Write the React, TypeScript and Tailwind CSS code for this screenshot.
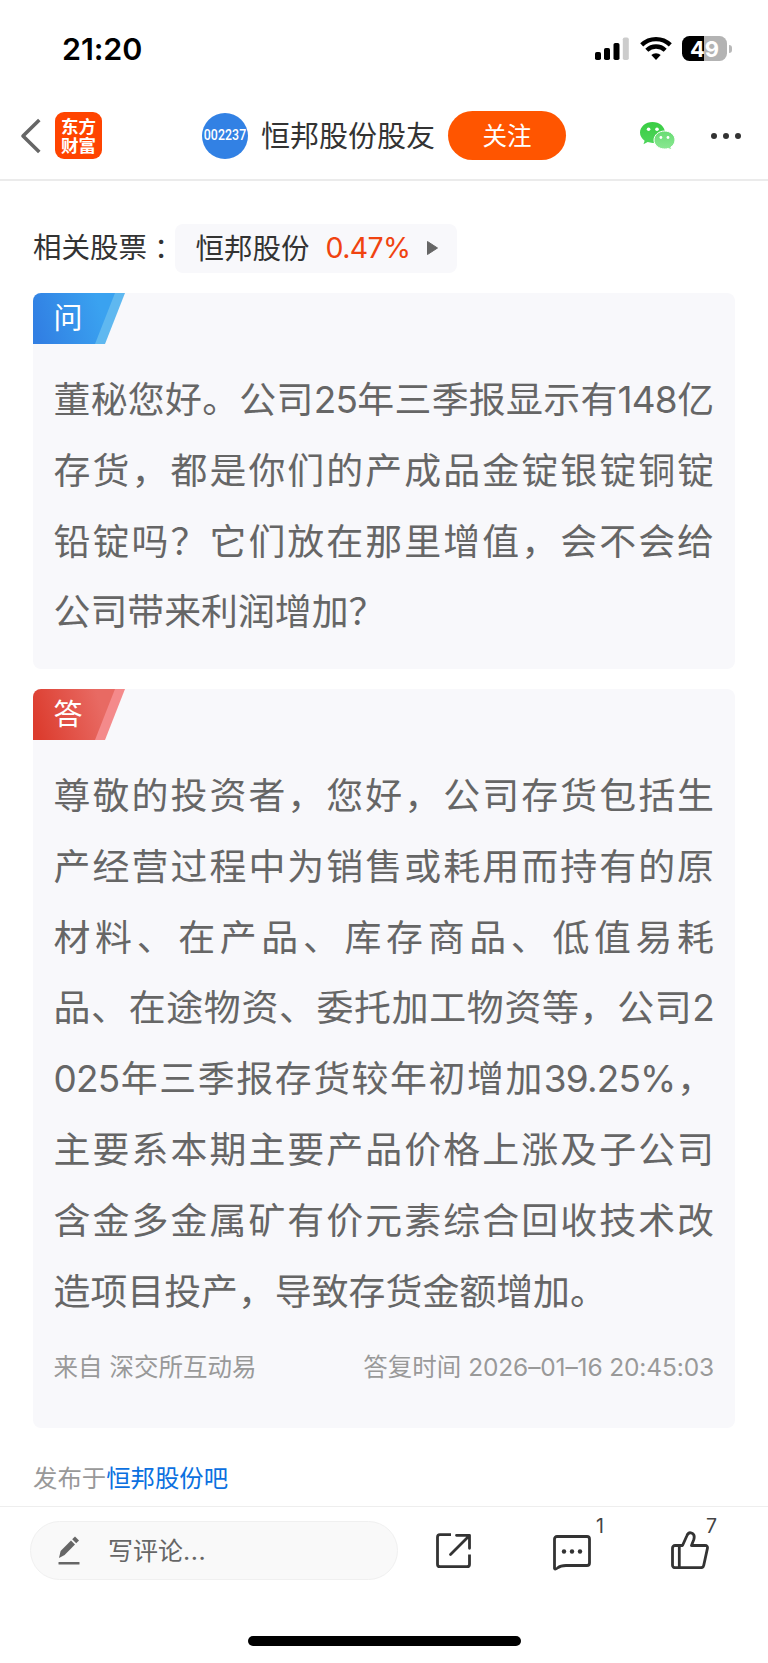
import React from 'react';

const questionLines = [
  '董秘您好。公司25年三季报显示有148亿',
  '存货，都是你们的产成品金锭银锭铜锭',
  '铅锭吗？它们放在那里增值，会不会给',
  '公司带来利润增加？',
];

const answerLines = [
  '尊敬的投资者，您好，公司存货包括生',
  '产经营过程中为销售或耗用而持有的原',
  '材料、在产品、库存商品、低值易耗',
  '品、在途物资、委托加工物资等，公司2',
  '025年三季报存货较年初增加39.25%，',
  '主要系本期主要产品价格上涨及子公司',
  '含金多金属矿有价元素综合回收技术改',
  '造项目投产，导致存货金额增加。',
];

// numbers sit a little tighter than the characters around them
const renderLine = (line: string) =>
  line.split(/([\d.%]+)/).map((part, i) =>
    i % 2 === 1 ? (
      <span key={i} className="tracking-[-0.8px]">{part}</span>
    ) : (
      part
    )
  );

const StatusBar: React.FC = () => (
  <div className="flex h-[92px] items-start justify-between pl-[62px] pr-[36.500px] pt-[36px] text-black">
    <span className="text-[30.5px] leading-[25px] font-semibold tracking-[-0.1px]">21:20</span>
    <div className="flex items-start">
      <svg className="mt-px h-[24px] w-[36px]" viewBox="0 0 36 24">
        <rect x="0" y="15" width="6" height="8" rx="1.8" />
        <rect x="9" y="11" width="6" height="12" rx="1.8" />
        <rect x="18.500" y="6" width="6" height="17" rx="1.8" />
        <rect x="27.800" y="0.500" width="6" height="22.500" rx="1.800" fill="#cccccc" />
      </svg>
      <svg className="ml-[9px] h-[24px] w-[32px]" viewBox="0 0 32 24" fill="none" stroke="#000" strokeWidth="4.300">
        <path d="M1.700 8.900a20.500 20.500 0 0 1 28.600 0" />
        <path d="M6.800 14.200a13.300 13.300 0 0 1 18.400 0" />
        <path d="M16 24l-4.700-4.900a6.800 6.800 0 0 1 9.400 0z" fill="#000" stroke="none" />
      </svg>
      <div className="ml-[10px] flex items-center">
        <div className="flex h-[25px] w-[45px] items-center justify-center rounded-[7.500px] bg-linear-to-r from-black from-49% to-[#b3b3b3] to-49% text-[22px] leading-none font-bold text-white">
          49
        </div>
        <div className="ml-[2px] h-[8px] w-[2.500px] rounded-r-full bg-[#b8b8b8]" />
      </div>
    </div>
  </div>
);

const Header: React.FC = () => (
  <header className="flex h-[89px] items-center border-b-2 border-[#ebebeb] pl-[20px] text-[#333]">
    <svg className="h-[36px] w-[21px]" viewBox="0 0 21 36" fill="none" stroke="#666" strokeWidth="3.600">
      <path d="M19.300 2L3 18l16.300 16" strokeLinejoin="round" />
    </svg>
    <div className="ml-[14px] flex h-[47px] w-[47px] flex-col items-center justify-center rounded-[9px] bg-[#ff4400] text-[17.500px] leading-[19px] font-bold text-white">
      <span>东方</span>
      <span>财富</span>
    </div>
    <div className="ml-[100px] flex h-[46px] w-[46px] items-center justify-center rounded-full bg-[#3281e4] text-white">
      <span className="scale-x-[0.85] font-[Roboto] text-[14.500px] font-medium tracking-[0.100px]">002237</span>
    </div>
    <h1 className="ml-[13px] w-[176px] pt-[2px] text-[29px] leading-none whitespace-nowrap">恒邦股份股友</h1>
    <button className="ml-[11px] h-[49px] w-[118px] rounded-full bg-[#ff5500] pt-[2px] text-[24.500px] leading-none text-white">
      关注
    </button>
    <svg className="ml-[74px] h-[28px] w-[36px]" viewBox="0 0 36 28">
      <defs>
        <linearGradient id="wxBack" x1="0" y1="0" x2="0" y2="1">
          <stop offset="0" stopColor="#39cd43" />
          <stop offset="1" stopColor="#4fd55c" />
        </linearGradient>
        <linearGradient id="wxFront" x1="0" y1="0" x2="0" y2="1">
          <stop offset="0" stopColor="#68dc73" />
          <stop offset="1" stopColor="#8ce894" />
        </linearGradient>
      </defs>
      <path d="M12.500 0C5.600 0 0 4.700 0 10.600c0 3.300 1.800 6.200 4.600 8.200L3.500 22.300l4.200-2.200c1.500.5 3.200.8 4.800.8 6.900 0 12.500-4.600 12.500-10.400S19.400 0 12.500 0z" fill="url(#wxBack)" />
      <path d="M24.600 9c-5.900 0-10.600 4-10.600 9s4.700 9 10.600 9c1.300 0 2.600-.2 3.700-.6l3.400 1.700-.9-3c2.600-1.600 4.200-4.200 4.200-7.100 0-5-4.500-9-10.400-9z" fill="url(#wxFront)" stroke="#fff" strokeWidth="1" />
      <circle cx="8.600" cy="7.200" r="1.800" fill="#fff" />
      <circle cx="17" cy="7.200" r="1.800" fill="#fff" />
      <circle cx="20.900" cy="15.500" r="1.400" fill="#fff" />
      <circle cx="28" cy="15.500" r="1.400" fill="#fff" />
    </svg>
    <div className="ml-[35px] flex gap-[6px]">
      <i className="h-[6px] w-[6px] rounded-full bg-[#333]" />
      <i className="h-[6px] w-[6px] rounded-full bg-[#333]" />
      <i className="h-[6px] w-[6px] rounded-full bg-[#333]" />
    </div>
  </header>
);

interface QaCardProps {
  tag: string;
  tone: 'blue' | 'red';
  lines: string[];
  className: string;
  children?: React.ReactNode;
}

const QaCard: React.FC<QaCardProps> = ({ tag, tone, lines, className, children }) => {
  const from = tone === 'blue' ? '#317fe3' : '#dc3c2e';
  const to = tone === 'blue' ? '#3aa2f0' : '#e86a63';
  const edge = tone === 'blue' ? '#5fb8f0' : '#f48a8b';

  return (
    <section className={`relative overflow-hidden rounded-[8px] bg-[#f8f8fb] pr-[21px] pl-[20.500px] pt-[72px] ${className}`}>
      <div className="absolute top-0 left-0 h-[51px] w-[92px]">
        <svg className="h-[51px] w-[92px]" viewBox="0 0 92 51">
          <defs>
            <linearGradient id={`tag-${tone}`} x1="0" y1="0.600" x2="1" y2="0.400">
              <stop offset="0" stopColor={from} />
              <stop offset="0.850" stopColor={to} />
            </linearGradient>
          </defs>
          <path d="M80 0h12L72 51H60z" fill={edge} />
          <path d="M0 0h82L62 51H0z" fill={`url(#tag-${tone})`} />
        </svg>
        <span className="absolute top-0 left-[20.500px] text-[29px] leading-[51px] text-white">{tag}</span>
      </div>
      <div className="text-[36.900px] leading-[70.800px] text-[#666]">
        {lines.map((line, i) => (
          <p
            key={line}
            className={`whitespace-nowrap ${i < lines.length - 1 ? '[text-align-last:justify]' : ''}`}
          >
            {renderLine(line)}
          </p>
        ))}
      </div>
      {children}
    </section>
  );
};

const BottomBar: React.FC = () => (
  <footer className="flex h-[157px] flex-col items-center justify-between border-t border-[#eeeeee] pb-[17px]">
    <div className="flex w-full items-start pt-[14px] pl-[30px] text-[#333]">
      <div className="flex h-[59px] w-[368px] items-center rounded-full border border-[#f0f0f0] bg-[#f9f9f9] pl-[27px] text-[#666]">
        <svg className="h-[29px] w-[22px]" viewBox="0 0 22 29" fill="#666">
          <path d="M1 22l1.600-7L13 4.500l4 4L6.600 19z" />
          <path d="M14.200 3.300L17 .5l4 4-2.800 2.800z" />
          <rect x="0.500" y="26" width="21" height="2.400" rx="0.500" />
        </svg>
        <span className="ml-[28px] pt-[2px] text-[25px] leading-none">写评论<span className="tracking-[0.500px]">...</span></span>
      </div>
      <svg className="mt-[12px] ml-[38px] h-[36px] w-[36px]" viewBox="0 0 36 36" fill="none" stroke="#333" strokeWidth="2.800">
        <path d="M15 1.700H4a2.500 2.500 0 0 0-2.500 2.500v27A2.500 2.500 0 0 0 4 33.700h27a2.500 2.500 0 0 0 2.500-2.500V21.500" />
        <path d="M20.500 2.300h13v13M33 3L14.500 21.500" strokeLinejoin="round" strokeLinecap="round" />
      </svg>
      <div className="relative mt-[14px] ml-[81px]">
        <svg className="h-[36px] w-[38px]" viewBox="0 0 38 36" fill="none" stroke="#333" strokeWidth="2.800" strokeLinejoin="round">
          <path d="M4 1.500h30a2.500 2.500 0 0 1 2.500 2.500v24a2.500 2.500 0 0 1-2.500 2.500H13c-4 0-6 .5-8.500 2.500-2 1.500-3 1.500-3 0V4A2.500 2.500 0 0 1 4 1.500z" />
          <g fill="#333" stroke="none">
            <circle cx="11" cy="16.500" r="2.200" />
            <circle cx="19" cy="16.500" r="2.200" />
            <circle cx="27" cy="16.500" r="2.200" />
          </g>
        </svg>
        <span className="absolute top-[-19px] left-[43px] text-[19.500px] leading-[20px] text-[#444]">1</span>
      </div>
      <div className="relative mt-[10px] ml-[80px]">
        <svg className="h-[38px] w-[38px]" viewBox="0 0 38 38" fill="none" stroke="#333" strokeWidth="2.800" strokeLinejoin="round">
          <path d="M4 14.500h7.500L16 4.500c1-2.500 3-3 4.500-2.500 3 1 3 4 2.300 6.500L20.500 14.500H34c2 0 2.800 1 2.400 3l-3.700 17c-.3 1.600-1 2.200-2.700 2.200H4a2.500 2.500 0 0 1-2.500-2.500V17A2.500 2.500 0 0 1 4 14.500z" />
          <path d="M8.300 14.500v22" />
        </svg>
        <span className="absolute top-[-15px] left-[35px] text-[19.500px] leading-[20px] text-[#444]">7</span>
      </div>
    </div>
    <div className="h-[10px] w-[273px] rounded-full bg-black" />
  </footer>
);

const App: React.FC = () => {
  return (
    <div
      lang="zh-CN"
      className="flex h-[1663px] w-[768px] flex-col overflow-hidden bg-white font-[Inter,'Noto_Sans_CJK_SC',sans-serif]"
    >
      <StatusBar />
      <Header />

      <main className="flex-1 px-[33px] pt-[42px]">
        {/* Related stock */}
        <div className="flex h-[50px] items-center text-[28.500px] leading-none text-[#333]">
          <span className="w-[142px] whitespace-nowrap">
            相关股票<span className="ml-[7px]">：</span>
          </span>
          <div className="flex h-[49px] w-[282px] items-center rounded-[8px] bg-[#f8f8fb] pl-[20.500px]">
            <span className="pt-[2px]">恒邦股份</span>
            <span className="ml-[16px] pt-px tracking-[-0.600px] text-[#f04310]">0.47%</span>
            <svg className="ml-[16px] h-[14px] w-[11px]" viewBox="0 0 11 14" fill="#666">
              <path d="M0.500 0.500L10.500 7 0.500 13.500z" stroke="#666" strokeLinejoin="round" />
            </svg>
          </div>
        </div>

        <QaCard tag="问" tone="blue" lines={questionLines} className="mt-[20px] h-[376px]" />

        <QaCard tag="答" tone="red" lines={answerLines} className="mt-[20px] h-[739px]">
          <div className="mt-[25px] flex justify-between text-[24.500px] leading-[30px] text-[#999]">
            <span>来自 深交所互动易</span>
            <span>
              答复时间 <span className="tracking-[-0.130px]">2026–01–16 20:45:03</span>
            </span>
          </div>
        </QaCard>

        <p className="mt-[33px] text-[24.400px] leading-[34px] text-[#999]">
          发布于<a className="text-[#0b70e0]">恒邦股份吧</a>
        </p>
      </main>

      <BottomBar />
    </div>
  );
};

export default App;
